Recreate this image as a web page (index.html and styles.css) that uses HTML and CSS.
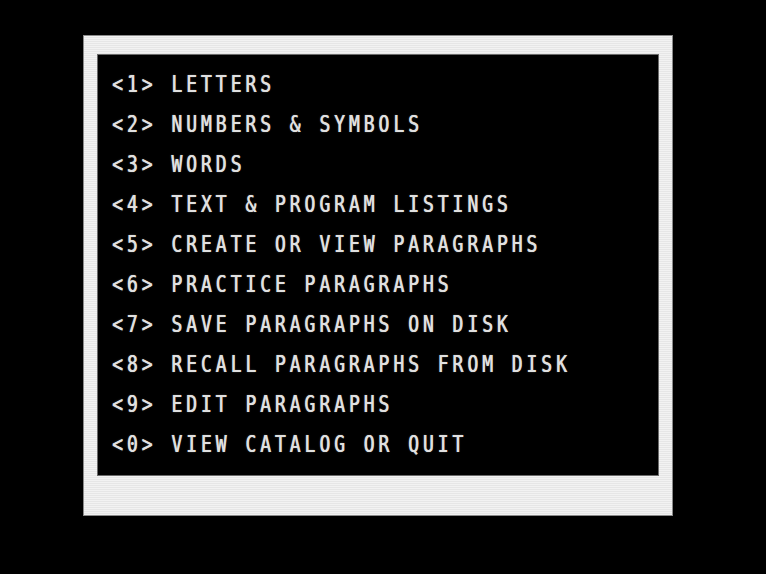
FILE: index.html
```html
<!DOCTYPE html>
<html>
<head>
<meta charset="utf-8">
<link rel="stylesheet" href="styles.css">
</head>
<body>
<div class="frame">
  <div class="screen">
    <ul class="menu">
      <li class="item">&lt;1&gt; LETTERS</li>
      <li class="item">&lt;2&gt; NUMBERS &amp; SYMBOLS</li>
      <li class="item">&lt;3&gt; WORDS</li>
      <li class="item">&lt;4&gt; TEXT &amp; PROGRAM LISTINGS</li>
      <li class="item">&lt;5&gt; CREATE OR VIEW PARAGRAPHS</li>
      <li class="item">&lt;6&gt; PRACTICE PARAGRAPHS</li>
      <li class="item">&lt;7&gt; SAVE PARAGRAPHS ON DISK</li>
      <li class="item">&lt;8&gt; RECALL PARAGRAPHS FROM DISK</li>
      <li class="item">&lt;9&gt; EDIT PARAGRAPHS</li>
      <li class="item">&lt;0&gt; VIEW CATALOG OR QUIT</li>
    </ul>
  </div>
</div>
</body>
</html>
```
FILE: styles.css
```css
html, body {
  margin: 0;
  padding: 0;
  background: #000;
  width: 766px;
  height: 574px;
  overflow: hidden;
}

.frame {
  box-sizing: border-box;
  margin: 36px 0 0 84px;
  width: 588px;
  height: 479px;
  padding: 19px 14px 40px 14px;
  background: repeating-linear-gradient(to bottom, #f2f2f2 0px, #f2f2f2 1px, #e6e6e6 1px, #e6e6e6 2px);
  box-shadow: 0 0 0 1px #8a8a8a;
}

.screen {
  box-sizing: border-box;
  width: 560px;
  height: 420px;
  background: #000;
  box-shadow: 0 0 0 1px #6a6a6a;
  padding: 9px 0 0 14px;
}

.menu {
  list-style: none;
  margin: 0;
  padding: 0;
  font-family: "DejaVu Sans Mono", "Liberation Mono", monospace;
  font-size: 18px;
  font-weight: normal;
  line-height: 32px;
  letter-spacing: 3.96px;
  color: #e0e0e0;
  text-shadow: 0.5px 0 0 #e0e0e0, 0 0 1.5px rgba(255, 255, 255, 0.35);
  transform: scaleY(1.25);
  transform-origin: 0 0;
}

.item {
  white-space: pre;
  height: 32px;
}
```
